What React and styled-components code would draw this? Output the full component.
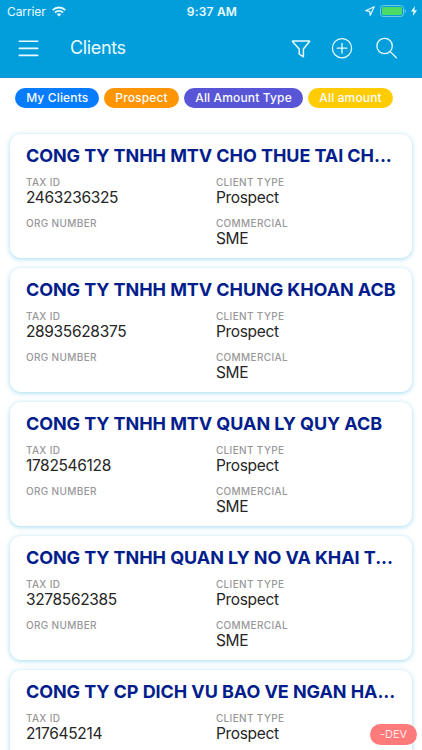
import React from 'react'
import styled, { createGlobalStyle } from 'styled-components'

const GlobalStyle = createGlobalStyle`
  * {
    box-sizing: border-box;
  }

  body {
    margin: 0;
    font-family: Inter, 'Liberation Sans', sans-serif;
    background: #fff;
  }
`

const Screen = styled.div`
  position: relative;
  display: flex;
  flex-direction: column;
  width: 422px;
  height: 750px;
  overflow: hidden;
  background: #fff;
`

const Header = styled.header`
  flex: none;
  height: 78px;
  background: #029edb;
  border-bottom: 1px solid #1a92cf;
  color: #e9fbff;
`

const StatusBar = styled.div`
  display: grid;
  grid-template-columns: 1fr auto 1fr;
  align-items: center;
  height: 22px;
  padding: 0 5px 0 7px;
`

const StatusGroup = styled.div`
  display: flex;
  align-items: center;
  gap: ${props => props.$gap}px;
  justify-content: ${props => (props.$end ? 'flex-end' : 'flex-start')};
`

const Carrier = styled.span`
  font-size: 12px;
  letter-spacing: -0.1px;
`

const Clock = styled.span`
  font-size: 12px;
  font-weight: 600;
  letter-spacing: 0.2px;
`

const Toolbar = styled.div`
  display: flex;
  align-items: center;
  height: 52px;
  padding: 0 24px 0 18px;
`

const ToolbarTitle = styled.h1`
  flex: 1;
  margin: 0 0 0 31px;
  font-size: 18px;
  font-weight: 400;
  line-height: 22px;
  letter-spacing: -0.35px;
`

const ToolbarActions = styled.div`
  display: flex;
  align-items: center;
  gap: 23px;
`

const FilterButton = styled.span`
  margin-right: -3px;
`

const Icon = styled.svg`
  display: block;
  flex: none;
  fill: none;
  stroke: currentColor;
`

const Filters = styled.div`
  display: flex;
  flex: none;
  gap: 5px;
  padding: 10px 15.3px 0;
`

const Chip = styled.span`
  flex: none;
  width: ${props => props.$width}px;
  height: 20px;
  border-radius: 10px;
  background: ${props => props.$color};
  color: #f8fbff;
  font-size: 12px;
  font-weight: 550;
  line-height: 20px;
  letter-spacing: 0.15px;
  text-align: center;
  white-space: nowrap;
`

const ClientList = styled.main`
  display: flex;
  flex-direction: column;
  gap: 10px;
  padding: 26px 10.4px 0;
`

const Card = styled.article`
  flex: none;
  height: 124px;
  padding: 11px 15.5px 0;
  border-radius: 11px;
  background: #fff;
  box-shadow: 0 1px 5px rgba(2, 158, 219, 0.38);
`

const CardTitle = styled.h2`
  margin: 0;
  color: #031e8c;
  font-size: 18px;
  font-weight: 680;
  line-height: 22px;
  letter-spacing: -0.07px;
  white-space: nowrap;
`

const Fields = styled.div`
  display: grid;
  grid-template-columns: 190px 1fr;
  row-gap: 6px;
  margin-top: 9px;
`

const Field = styled.div`
  height: 35px;
`

const Label = styled.div`
  color: #98989a;
  font-size: 10px;
  font-weight: 500;
  line-height: 12px;
  letter-spacing: 0.35px;
`

const Value = styled.div`
  color: #262626;
  font-size: 15.5px;
  line-height: 20px;
  letter-spacing: -0.32px;
`

const DevBadge = styled.div`
  position: absolute;
  right: 5px;
  bottom: 5px;
  width: 47px;
  height: 21px;
  border-radius: 11px;
  background: #ff7b7b;
  color: #ffe5e5;
  font-size: 11px;
  line-height: 21px;
  text-align: center;
`

const filters = [
  { label: 'My Clients', color: '#087cff', width: 84 },
  { label: 'Prospect', color: '#ff9502', width: 74.5 },
  { label: 'All Amount Type', color: '#5856d6', width: 119.5 },
  { label: 'All amount', color: '#ffcc02', width: 84.5 }
]

const clients = [
  { name: 'CONG TY TNHH MTV CHO THUE TAI CH...', taxId: '2463236325' },
  { name: 'CONG TY TNHH MTV CHUNG KHOAN ACB', taxId: '28935628375' },
  { name: 'CONG TY TNHH MTV QUAN LY QUY ACB', taxId: '1782546128' },
  { name: 'CONG TY TNHH QUAN LY NO VA KHAI T...', taxId: '3278562385' },
  { name: 'CONG TY CP DICH VU BAO VE NGAN HA...', taxId: '217645214' }
]

const WifiIcon = () => (
  <Icon width="14" height="11" viewBox="0 0 14 11" strokeWidth="1.9">
    <path d="M.7 4.1a9 9 0 0 1 12.6 0M3 6.5a5.8 5.8 0 0 1 8 0" />
    <path d="M7 10.6 4.8 8.3a3.1 3.1 0 0 1 4.4 0z" fill="currentColor" stroke="none" />
  </Icon>
)

const LocationIcon = () => (
  <Icon width="10" height="10" viewBox="0 0 10 10" strokeWidth="1.2" strokeLinejoin="round">
    <path d="M9.2.8.7 4.7l4 .6.5 4z" />
  </Icon>
)

const BatteryIcon = () => (
  <Icon width="26" height="12" viewBox="0 0 26 12">
    <rect x=".5" y=".5" width="23" height="11" rx="2.7" stroke="#70c9e8" />
    <rect x="2" y="2" width="20" height="8" rx="1.3" fill="#4cd964" stroke="none" />
    <path d="M24.6 4v4q1.2-.6 1.2-2t-1.2-2z" fill="#70c9e8" stroke="none" />
  </Icon>
)

const BoltIcon = () => (
  <Icon width="6" height="10" viewBox="0 0 6 10">
    <path d="M4 0 0 5.6h2.5L1.8 10 6 4.2H3.4z" fill="currentColor" stroke="none" />
  </Icon>
)

const MenuIcon = () => (
  <Icon width="21" height="17" viewBox="0 0 21 17" strokeWidth="1.6" strokeLinecap="round">
    <path d="M1.3 1.3h18.4M1.3 8.4h18.4M1.3 15.4h18.4" />
  </Icon>
)

const FilterIcon = () => (
  <Icon width="20" height="20" viewBox="0 0 20 20" strokeWidth="1.5" strokeLinejoin="round">
    <path d="M1.5 3h17v.5L12.4 11v7.8L8.2 16v-5L1.5 3.5z" />
  </Icon>
)

const AddIcon = () => (
  <Icon width="22" height="22" viewBox="0 0 22 22" strokeWidth="1.3" strokeLinecap="round">
    <circle cx="11" cy="11.2" r="9.6" />
    <path d="M11 6.4V16M6.2 11.2h9.6" />
  </Icon>
)

const SearchIcon = () => (
  <Icon width="22" height="22" viewBox="0 0 22 22" strokeWidth="1.3" strokeLinecap="round">
    <circle cx="8.6" cy="9" r="7.7" />
    <path d="m14.2 14.6 6.2 6.2" />
  </Icon>
)

const ClientCard = ({ client }) => (
  <Card>
    <CardTitle>{client.name}</CardTitle>
    <Fields>
      <Field>
        <Label>TAX ID</Label>
        <Value>{client.taxId}</Value>
      </Field>
      <Field>
        <Label>CLIENT TYPE</Label>
        <Value>Prospect</Value>
      </Field>
      <Field>
        <Label>ORG NUMBER</Label>
      </Field>
      <Field>
        <Label>COMMERCIAL</Label>
        <Value>SME</Value>
      </Field>
    </Fields>
  </Card>
)

const App = () => (
  <Screen>
    <GlobalStyle />
    <Header>
      <StatusBar>
        <StatusGroup $gap={6}>
          <Carrier>Carrier</Carrier>
          <WifiIcon />
        </StatusGroup>
        <Clock>9:37 AM</Clock>
        <StatusGroup $end $gap={5}>
          <LocationIcon />
          <BatteryIcon />
          <BoltIcon />
        </StatusGroup>
      </StatusBar>
      <Toolbar>
        <MenuIcon />
        <ToolbarTitle>Clients</ToolbarTitle>
        <ToolbarActions>
          <FilterButton>
            <FilterIcon />
          </FilterButton>
          <AddIcon />
          <SearchIcon />
        </ToolbarActions>
      </Toolbar>
    </Header>
    <Filters>
      {filters.map(f => (
        <Chip key={f.label} $color={f.color} $width={f.width}>{f.label}</Chip>
      ))}
    </Filters>
    <ClientList>
      {clients.map(client => (
        <ClientCard key={client.taxId} client={client} />
      ))}
    </ClientList>
    <DevBadge>-DEV</DevBadge>
  </Screen>
)

export default App
